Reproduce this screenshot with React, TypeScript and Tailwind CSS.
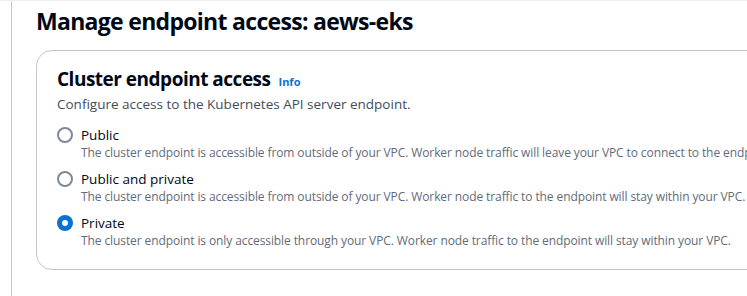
import React from 'react';

interface Option {
  label: string;
  description: string;
  checked?: boolean;
}

const options: Option[] = [
  {
    label: 'Public',
    description:
      'The cluster endpoint is accessible from outside of your VPC. Worker node traffic will leave your VPC to connect to the endpoint.',
  },
  {
    label: 'Public and private',
    description:
      'The cluster endpoint is accessible from outside of your VPC. Worker node traffic to the endpoint will stay within your VPC.',
  },
  {
    label: 'Private',
    description:
      'The cluster endpoint is only accessible through your VPC. Worker node traffic to the endpoint will stay within your VPC.',
    checked: true,
  },
];

const Radio: React.FC<{ checked?: boolean }> = ({ checked }) =>
  checked ? (
    <span className="mt-[1px] flex h-4 w-4 shrink-0 items-center justify-center rounded-full bg-[#0972d3]">
      <span className="h-1.5 w-1.5 rounded-full bg-white" />
    </span>
  ) : (
    <span className="mt-[1px] h-4 w-4 shrink-0 rounded-full border-2 border-[#7d8998] bg-white" />
  );

export default function App() {
  return (
    <div
      className="h-[296px] w-[747px] overflow-hidden bg-white border-t border-[#eceef0]"
      style={{ fontFamily: '"Open Sans", "Noto Sans", sans-serif' }}
    >
      <div className="ml-[11px] h-full border-l border-[#c6c6cd] pl-6">
        <h1 className="pt-[5px] text-[23px] font-bold leading-[30px] tracking-[-0.7px] text-[#000716]">
          Manage endpoint access: aews-eks
        </h1>
        <div className="mt-[14px] w-[760px] rounded-2xl border border-[#c6c6cd] px-5 pt-4 pb-[19px]">
          <div className="flex items-baseline gap-2">
            <h2 className="text-[19px] font-bold leading-6 tracking-[-0.5px] text-[#000716]">
              Cluster endpoint access
            </h2>
            <span className="text-[11px] font-bold text-[#0972d3]">Info</span>
          </div>
          <p className="mt-[3px] text-[13.5px] leading-5 text-[#414d5c]">
            Configure access to the Kubernetes API server endpoint.
          </p>
          <div className="mt-3 flex flex-col gap-2">
            {options.map((o) => (
              <div key={o.label} className="flex gap-2">
                <Radio checked={o.checked} />
                <div className="flex flex-col">
                  <span className="text-[13.5px] leading-[18px] text-[#000716]">{o.label}</span>
                  <span className="whitespace-nowrap text-[12px] leading-[18px] tracking-[-0.1px] text-[#5f6b7a]">
                    {o.description}
                  </span>
                </div>
              </div>
            ))}
          </div>
        </div>
      </div>
    </div>
  );
}
